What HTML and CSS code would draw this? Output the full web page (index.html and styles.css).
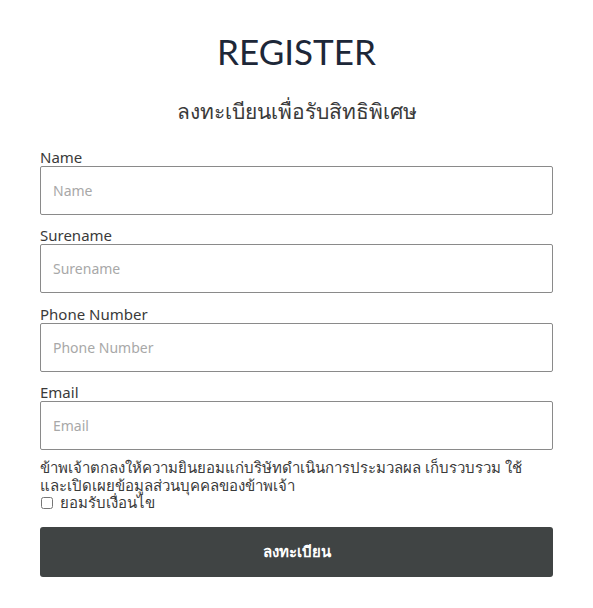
FILE: index.html
```html
<!DOCTYPE html>
<html lang="th">
<head>
<meta charset="utf-8">
<title>Register</title>
<link rel="stylesheet" href="styles.css">
</head>
<body>
<main class="page">
  <h1 class="title">REGISTER</h1>
  <p class="subtitle">ลงทะเบียนเพื่อรับสิทธิพิเศษ</p>
  <form class="form">
    <div class="field">
      <label class="label" for="name">Name</label>
      <input class="input" id="name" type="text" placeholder="Name">
    </div>
    <div class="field">
      <label class="label" for="surname">Surename</label>
      <input class="input" id="surname" type="text" placeholder="Surename">
    </div>
    <div class="field">
      <label class="label" for="phone">Phone Number</label>
      <input class="input" id="phone" type="text" placeholder="Phone Number">
    </div>
    <div class="field">
      <label class="label" for="email">Email</label>
      <input class="input" id="email" type="text" placeholder="Email">
    </div>
    <div class="consent">
      <p class="consent-text">ข้าพเจ้าตกลงให้ความยินยอมแก่บริษัทดำเนินการประมวลผล เก็บรวบรวม ใช้ และเปิดเผยข้อมูลส่วนบุคคลของข้าพเจ้า</p>
      <label class="check"><input type="checkbox" class="checkbox"> ยอมรับเงื่อนไข</label>
    </div>
    <button type="button" class="button">ลงทะเบียน</button>
  </form>
</main>
</body>
</html>
```
FILE: styles.css
```css
* { box-sizing: border-box; }
body {
  margin: 0;
  background: #fff;
  font-family: "Noto Sans", "Open Sans", sans-serif;
  color: #333;
}
.page {
  width: 513px;
  margin: 0 40px;
  padding-top: 29px;
}
.title {
  margin: 0;
  text-align: center;
  font-family: Lato, "Liberation Sans", sans-serif;
  font-weight: 400;
  font-size: 35px;
  line-height: 44px;
  letter-spacing: 0;
  color: #1d2738;
}
.subtitle {
  margin: 25px 0 0;
  text-align: center;
  font-size: 21px;
  line-height: 26px;
  font-weight: 300;
  color: #3a3a3a;
}
.form {
  display: flex;
  flex-direction: column;
  margin-top: 24px;
}
.field {
  display: flex;
  flex-direction: column;
  margin-bottom: 11.3px;
}
.label {
  font-size: 15px;
  line-height: 18px;
  color: #3a3a3a;
}
.input {
  height: 49px;
  border: 1px solid #8a8a8a;
  border-radius: 2px;
  padding: 0 12px;
  font-family: "Noto Sans", "Open Sans", sans-serif;
  font-size: 14px;
  color: #333;
  outline: none;
}
.input::placeholder { color: #a8a8a8; }
.consent {
  margin-top: -2px;
  padding-right: 12px;
  font-size: 15px;
  line-height: 17.5px;
  color: #3a3a3a;
}
.consent-text { margin: 0; }
.check {
  display: flex;
  align-items: center;
  gap: 7px;
  padding-left: 1px;
}
.checkbox {
  margin: 0;
  width: 12px;
  height: 12px;
}
.button {
  margin-top: 15px;
  height: 50px;
  border: none;
  border-radius: 3px;
  background: #404444;
  color: #fff;
  font-family: "Noto Sans", sans-serif;
  font-weight: 600;
  font-size: 15px;
}
```
